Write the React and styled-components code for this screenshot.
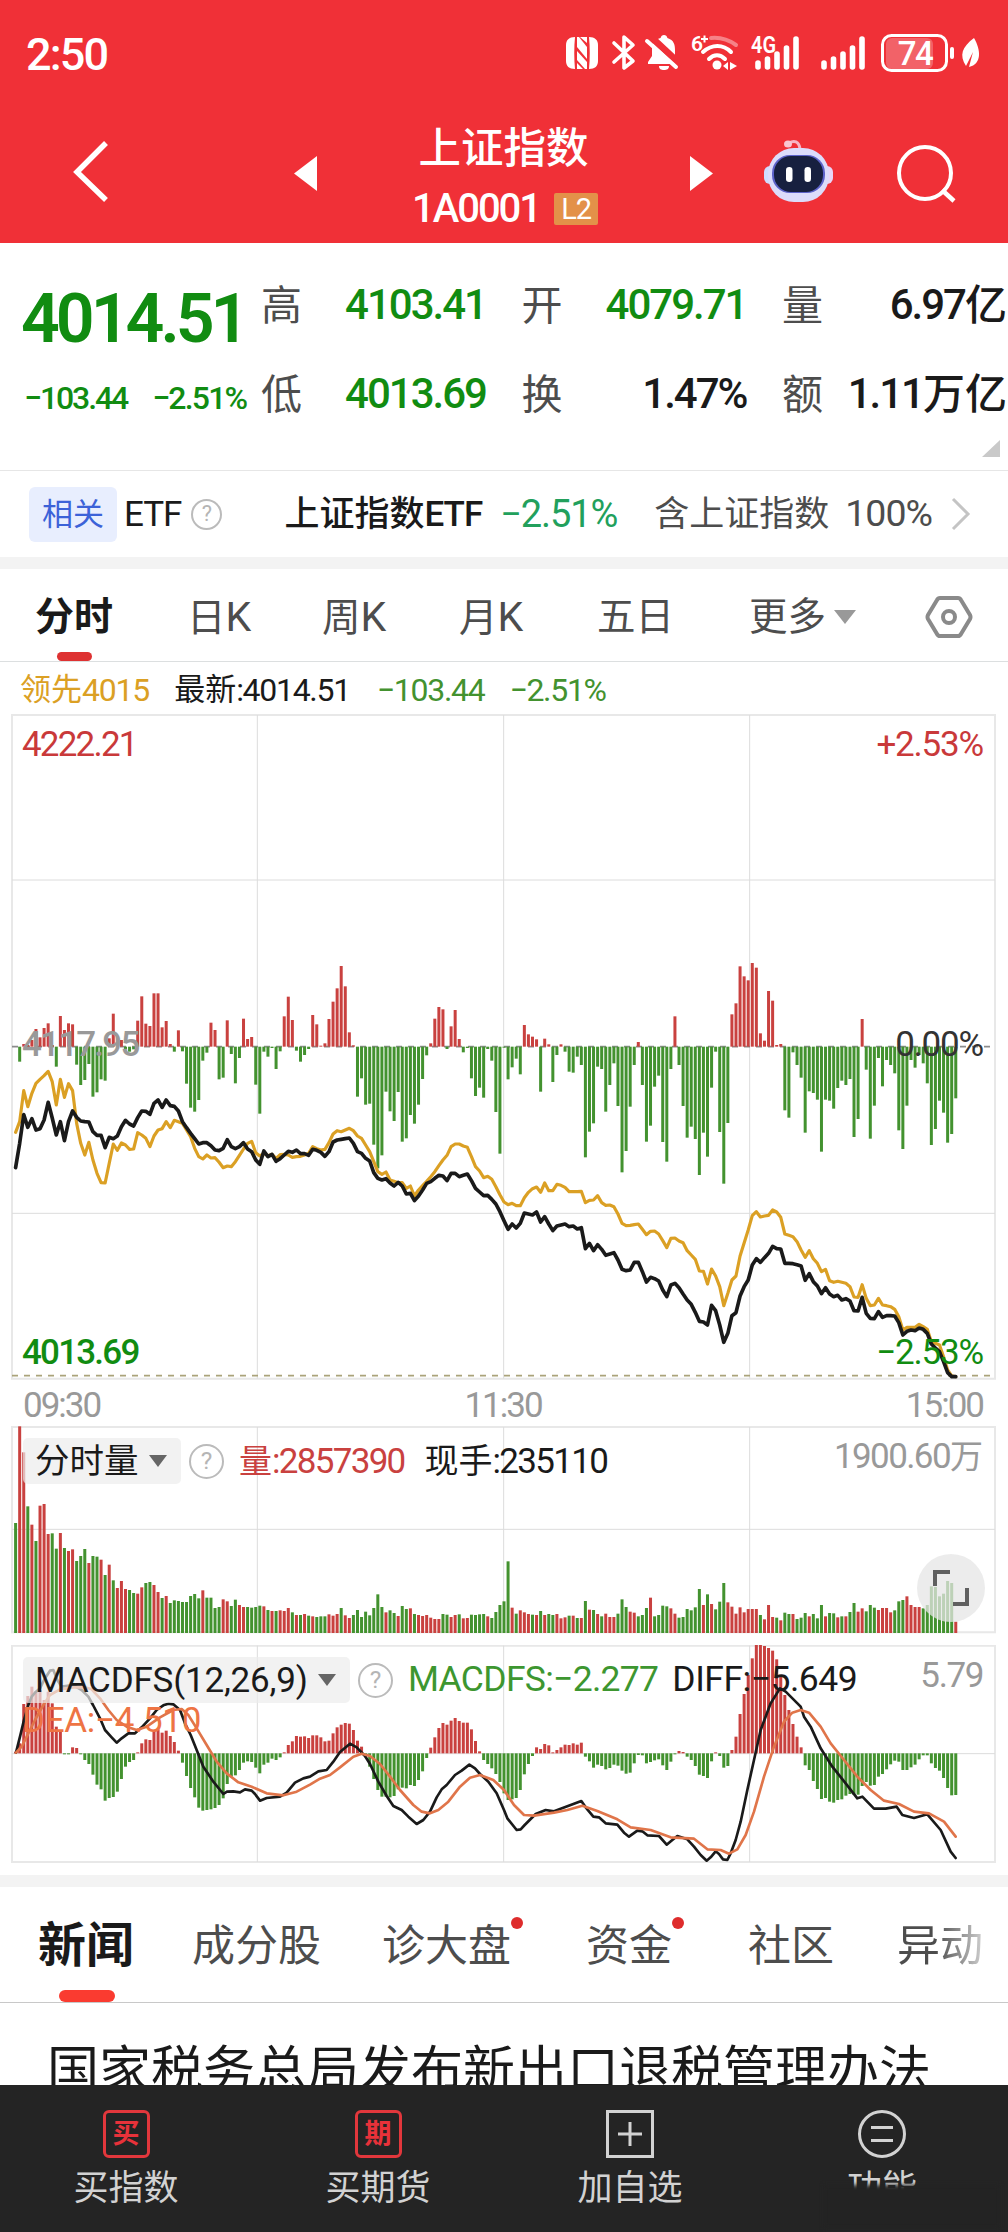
import React from "react"
import styled, { createGlobalStyle, css } from "styled-components"

const GlobalStyle = createGlobalStyle`
  * {
    box-sizing: border-box;
  }

  body {
    margin: 0;
    background: #fff;
    font-family: Roboto, "Noto Sans CJK SC", sans-serif;
    color: #1a1a1a;
  }
`

const RED = "#c9413f"
const GREEN = "#43922f"
const DOWN = "#118c11"
const GOLD = "#dba024"

/* one entry per trading minute, three units per pixel */
const advance = [
  0, -45, 8, 5, 20, 53, 28, 56, 70, 5, -60, 92, 50, 70, 67, -54, -115, -100, -52, -150,
  -137, -98, -102, 25, 99, 30, 20, -8, -15, -8, 78, 151, 69, 62, 160, 160, 58, 77, 8, -15,
  49, -14, -111, -183, -195, -160, -42, -18, 72, 50, -98, -93, 79, -22, -110, -34, 84, 23, 29, -114,
  -201, -15, -30, -4, -67, -14, 91, 150, 80, -12, -45, -25, -7, 95, 67, 3, 10, 83, 135, 175,
  242, 181, 43, 4, -150, -95, -174, -171, -294, -365, -326, -135, -194, -223, -136, -285, -275, -205, -231, -174,
  -97, -26, 10, 84, 119, 112, -7, 61, 110, 23, -17, -4, -95, -148, -123, -153, -7, -42, -196, -321,
  -3, -98, -62, -36, -83, 65, 37, 30, 22, -135, 24, 7, -106, -25, 7, -15, -75, -78, -30, -55,
  -332, -255, -230, -60, -67, -195, -115, -50, -178, -377, -313, -180, -55, 14, -115, -285, -237, -120, -87, -286,
  -345, -67, 91, -55, -178, -273, -240, -277, -385, -258, -330, -123, -15, -256, -411, -229, 97, 130, 241, 211,
  199, 251, 237, 40, 18, 167, 138, 5, 8, -191, -213, -17, -55, -93, -258, -134, -139, -159, -315, -159,
  -162, -186, -124, -102, -115, -97, -271, -217, 83, -69, -276, -177, -34, -119, -40, -55, -80, -251, -307, -177,
  -40, -63, -25, -50, -110, -295, -247, -162, -198, -288, -262, -155,
]

const price = [
  683, 610, 524, 562, 536, 570, 566, 540, 487, 534, 585, 545, 602, 545, 513, 532, 543, 545, 546, 575,
  586, 586, 623, 592, 596, 588, 560, 541, 552, 558, 533, 513, 514, 523, 490, 480, 502, 480, 497, 499,
  513, 545, 563, 580, 596, 612, 608, 608, 617, 630, 632, 625, 599, 620, 626, 620, 608, 627, 635, 660,
  673, 633, 650, 643, 664, 656, 645, 634, 637, 630, 641, 641, 646, 628, 631, 637, 649, 635, 606, 600,
  598, 596, 594, 610, 635, 640, 655, 663, 698, 715, 720, 716, 729, 738, 727, 738, 762, 760, 782, 768,
  750, 730, 725, 715, 706, 708, 722, 700, 700, 710, 706, 702, 722, 745, 756, 767, 766, 778, 792, 815,
  842, 868, 852, 864, 850, 819, 822, 825, 816, 846, 830, 852, 872, 858, 855, 852, 860, 858, 867, 863,
  926, 910, 932, 914, 928, 946, 942, 938, 960, 988, 992, 990, 967, 967, 995, 1026, 1012, 1016, 1023, 1050,
  1070, 1035, 1030, 1043, 1062, 1080, 1093, 1117, 1144, 1146, 1155, 1096, 1112, 1155, 1207, 1180, 1127, 1118, 1068, 1040,
  1020, 975, 956, 967, 953, 940, 919, 926, 927, 970, 970, 971, 974, 978, 1021, 1001, 1025, 1038, 1061, 1043,
  1062, 1070, 1066, 1080, 1076, 1083, 1112, 1113, 1072, 1120, 1135, 1136, 1115, 1132, 1127, 1127, 1128, 1148, 1185, 1174,
  1170, 1172, 1164, 1168, 1180, 1212, 1224, 1235, 1265, 1298, 1310, 1310,
]

const leading = [
  577, 545, 452, 500, 460, 430, 418, 407, 394, 425, 495, 418, 472, 431, 452, 550, 610, 645, 607, 660,
  700, 728, 729, 670, 612, 631, 609, 615, 628, 627, 578, 585, 595, 620, 588, 570, 566, 545, 563, 541,
  545, 550, 570, 590, 625, 650, 657, 645, 654, 653, 667, 683, 678, 680, 665, 646, 627, 610, 604, 638,
  648, 640, 647, 643, 655, 644, 643, 645, 652, 650, 649, 645, 640, 620, 626, 630, 628, 608, 582, 572,
  575, 570, 565, 572, 588, 595, 615, 635, 665, 695, 703, 696, 720, 724, 728, 728, 745, 738, 768, 750,
  737, 724, 710, 695, 677, 660, 646, 620, 612, 612, 618, 622, 650, 680, 693, 713, 709, 718, 740, 764,
  786, 794, 790, 797, 797, 773, 757, 746, 741, 757, 729, 752, 752, 733, 736, 742, 755, 755, 755, 754,
  788, 781, 780, 767, 788, 796, 795, 800, 822, 850, 857, 856, 854, 852, 868, 884, 874, 873, 882, 902,
  923, 895, 894, 903, 908, 932, 945, 958, 993, 994, 1032, 987, 1008, 1040, 1097, 1060, 1020, 1008, 948, 909,
  870, 827, 815, 831, 828, 826, 810, 816, 832, 882, 886, 890, 905, 930, 952, 932, 956, 970, 995, 988,
  1022, 1027, 1024, 1027, 1030, 1040, 1071, 1072, 1034, 1075, 1097, 1095, 1075, 1095, 1097, 1100, 1108, 1130, 1170, 1162,
  1162, 1162, 1153, 1160, 1168, 1205, 1210, 1215, 1250, 1290, 1308, 1310,
]

/* negative = falling minute, drawn green */
const volume = [
  -330, 620, 542, -380, 325, -276, 382, 387, 297, -299, -253, 300, -255, 246, 251, -216, -231, -252, 210, -231,
  -229, 220, -174, 205, -158, 135, 156, 132, -129, -120, 118, 137, -150, -153, 144, 123, -105, 111, -90, -98,
  -96, -93, -93, -111, -117, -104, 128, -106, -106, -75, -78, 101, 95, -81, -100, 84, 78, -78, -76, -78,
  -82, 80, -69, 66, -66, 68, 66, 75, -62, 54, -54, 57, -52, 50, -48, -50, -50, 56, 52, 57,
  -75, 53, 45, -54, -69, -48, -64, -53, -75, -116, -78, 62, -68, -60, 51, -81, -72, 74, -57, 54,
  51, 54, 46, 42, 42, -57, -55, 48, 54, -56, 44, 45, -55, -54, -56, -57, 50, -45, -63, -84,
  -95, -215, 76, -58, 68, 62, 57, -55, 54, -66, 54, -57, -54, 57, 44, 47, -52, 52, -45, 45,
  -96, 70, -69, 57, -50, 58, 48, 48, -58, -101, -78, 64, 61, -50, -54, -75, 106, -50, -54, -82,
  -80, 74, 58, -46, -48, -72, -68, -77, -132, 84, -116, 87, -71, -94, -150, 92, 79, 58, 77, 62,
  72, 72, 72, -54, 41, 84, 48, -46, 38, -61, -57, 57, -42, -46, -60, 50, -57, -44, -84, 50,
  -60, -59, 47, -50, 50, -63, -90, 64, 74, -65, -84, -76, 69, 75, 75, 62, -68, -95, -99, 110,
  84, 78, 78, -74, -84, -140, -138, -110, -118, -156, -150, 34,
]

const macd = [
  5, 30, 148, 172, 200, 185, 190, 160, 185, 150, 80, 65, -3, -3, 18, 16, -3, -20, -32, -64,
  -94, -108, -142, -134, -131, -115, -77, -40, -26, -20, 3, 30, 42, 40, 65, 72, 62, 68, 52, 34,
  8, -28, -68, -104, -132, -163, -172, -170, -168, -164, -155, -135, -92, -70, -66, -50, -28, -24, -26, -43,
  -60, -34, -28, -16, -20, -12, 3, 25, 36, 52, 50, 51, 46, 54, 54, 48, 36, 38, 60, 78,
  86, 91, 89, 70, 38, 20, -12, -40, -77, -110, -130, -130, -132, -128, -108, -103, -105, -95, -98, -80,
  -54, -14, 17, 48, 76, 91, 86, 98, 106, 97, 92, 92, 72, 37, 6, -20, -32, -45, -62, -86,
  -120, -140, -138, -134, -110, -63, -32, -8, 18, 13, 28, 24, 3, 10, 18, 26, 25, 30, 26, 32,
  -10, -24, -43, -34, -38, -48, -44, -34, -37, -52, -61, -58, -30, -5, -6, -30, -26, -21, -18, -36,
  -50, -25, -3, 7, 4, -10, -20, -38, -64, -68, -74, -24, 3, -8, -43, -38, 10, 50, 118, 178,
  235, 285, 325, 325, 322, 316, 308, 282, 230, 175, 130, 88, 50, 18, -36, -50, -83, -107, -137, -134,
  -145, -148, -140, -138, -127, -122, -125, -124, -98, -86, -97, -95, -70, -62, -48, -33, -22, -25, -50, -50,
  -42, -34, -18, -6, -6, -30, -44, -52, -74, -104, -126, -125,
]

const diffLine =
  "48,368 60,320 72,270 85,225 95,200 108,185 120,175 132,150 150,122 160,120 172,150 185,170 220,165 245,180 265,200 279,225 300,265 315,300 335,322 350,338 365,325 385,310 405,310 425,292 450,265 470,240 490,226 505,221 520,223 540,240 555,280 572,315 590,360 610,410 640,455 670,492 681,485 700,484 720,487 735,478 755,482 765,492 780,512 800,504 840,500 860,488 885,458 910,445 930,440 955,424 980,420 1000,395 1020,366 1050,341 1070,352 1095,378 1110,402 1135,455 1160,498 1180,528 1205,540 1225,560 1250,582 1270,570 1290,545 1310,502 1325,478 1340,465 1365,435 1385,422 1408,404 1425,415 1440,432 1465,455 1490,490 1512,540 1522,565 1550,600 1562,598 1574,585 1607,552 1637,540 1662,544 1744,513 1757,532 1780,560 1797,562 1817,580 1852,584 1872,608 1887,620 1912,602 1927,604 1942,616 1977,618 2000,644 2017,630 2032,618 2062,628 2082,650 2102,675 2120,692 2132,682 2147,664 2157,672 2169,688 2182,690 2192,670 2207,630 2222,575 2242,480 2262,390 2282,300 2312,220 2340,175 2357,185 2402,230 2412,260 2432,290 2462,355 2497,410 2537,460 2572,505 2587,500 2622,536 2657,536 2690,530 2707,555 2742,564 2782,553 2822,600 2852,665 2867,684"

const deaLine =
  "48,368 65,350 85,310 105,270 130,225 150,195 180,178 220,172 255,172 275,178 300,205 325,240 350,270 380,290 410,300 440,290 480,262 520,240 545,237 565,255 590,295 620,345 650,395 680,430 715,457 755,470 800,490 850,496 890,485 930,464 960,446 990,435 1020,412 1060,380 1085,371 1110,378 1140,402 1170,440 1200,480 1240,525 1265,545 1290,550 1315,540 1345,515 1380,470 1410,443 1440,435 1480,450 1512,480 1542,525 1572,555 1602,557 1662,548 1702,540 1747,527 1792,543 1852,568 1892,592 1952,600 2012,622 2082,626 2122,658 2162,660 2187,671 2212,658 2237,615 2262,545 2292,440 2322,350 2352,275 2377,248 2402,240 2427,248 2462,290 2492,340 2532,390 2572,440 2612,480 2652,512 2697,522 2742,545 2787,550 2832,575 2867,620"

const minuteX = i => 46.8 + i * 12.21
const toPoints = series => series.map((y, i) => `${minuteX(i)},${y}`).join(" ")

const Screen = styled.main`
  width: 1008px;
  height: 2232px;
  display: flex;
  flex-direction: column;
  overflow: hidden;
  background: #fff;
`

const Txt = styled.span`
  font-size: ${props => props.$s || 35}px;
  font-weight: ${props => props.$w || 400};
  letter-spacing: ${props => props.$ls || 0}px;
  color: ${props => props.$c || "inherit"};
  line-height: 1;
  white-space: nowrap;
`

const StatusBar = styled.div`
  height: 108px;
  flex-shrink: 0;
  display: flex;
  justify-content: space-between;
  align-items: flex-start;
  padding: 34px 28px 0 26px;
  background: #f03037;
  color: #fff;
`

const Clock = styled(Txt)`
  line-height: 42px;
`

const StatusIcons = styled.div`
  display: flex;

  svg {
    display: block;
    overflow: visible;
  }
`

const Header = styled.header`
  height: 135px;
  flex-shrink: 0;
  display: flex;
  align-items: flex-start;
  padding-left: 73px;
  background: #f03037;
  color: #fff;
`

const HeaderIcon = styled.svg`
  flex-shrink: 0;
  margin-left: ${props => props.$left || 0}px;
  margin-top: ${props => props.$top}px;
`

const Title = styled.div`
  width: 373px;
  display: flex;
  flex-direction: column;
  align-items: center;
  padding-top: 20px;
`

const TitleCode = styled.div`
  display: flex;
  align-items: center;
  gap: 14px;
  margin-top: 18px;
  padding-left: 3px;
`

const Level = styled.span`
  width: 44px;
  height: 32px;
  border-radius: 2px;
  background: #e39149;
  font-size: 29px;
  line-height: 32px;
  text-align: center;
  letter-spacing: -1px;
`

const Quote = styled.section`
  height: 228px;
  flex-shrink: 0;
  display: flex;
  position: relative;
  border-bottom: 1px solid #e6e6e6;
`

const Last = styled.div`
  width: 261px;
  flex-shrink: 0;
  padding: 42px 0 0 21px;
  color: ${DOWN};
`

const Change = styled.div`
  display: flex;
  gap: 25px;
  margin-top: 29px;
  padding-left: 3px;
`

const Stats = styled.div`
  display: grid;
  grid-template-columns: repeat(3, 225px);
  grid-auto-rows: 89px;
  column-gap: 35.5px;
  padding-top: 17px;
`

const Stat = styled.div`
  display: flex;
  align-items: center;
  justify-content: space-between;
`

const StatLabel = styled(Txt)`
  padding-top: 3px;
`

const Value = styled.span`
  display: flex;
  align-items: center;
`

const Corner = styled.i`
  position: absolute;
  right: 8px;
  bottom: 13px;
  border-left: 18px solid transparent;
  border-bottom: 17px solid #c9c9c9;
`

const EtfRow = styled.section`
  height: 86px;
  flex-shrink: 0;
  display: flex;
  align-items: center;
  padding-left: 29px;
`

const Tag = styled.span`
  width: 88px;
  height: 55px;
  border-radius: 6px;
  background: #e8eefe;
  color: #3c62d8;
  font-size: 31px;
  line-height: 55px;
  text-align: center;
  margin-right: 7px;
`

const Push = styled.span`
  margin-left: ${props => props.$left}px;
  display: flex;
  align-items: center;
`

const Band = styled.div`
  height: 12px;
  flex-shrink: 0;
  background: #f3f3f3;
`

const tabBar = css`
  flex-shrink: 0;
  display: flex;
  align-items: center;
  position: relative;
  white-space: nowrap;
`

const ChartTabs = styled.nav`
  ${tabBar}
  height: 93px;
  padding-top: 4px;
  border-bottom: 1px solid #dcdfe0;
  color: #4d4d4d;
`

const Tab = styled.span`
  margin-left: ${props => props.$left}px;
  width: ${props => props.$width}px;
  font-size: ${props => props.$s || 38.5}px;
  font-weight: ${props => (props.$active ? 700 : 400)};
  color: ${props => (props.$active ? "#1a1a1a" : "inherit")};
  line-height: 1;
  position: relative;
`

const Period = styled.span`
  font-size: 41px;
`

const Indicator = styled.i`
  position: absolute;
  bottom: 0;
  left: ${props => props.$left}px;
  width: ${props => props.$width}px;
  height: ${props => props.$height}px;
  border-radius: 6px;
  background: ${props => props.$c};
`

const Legend = styled.div`
  height: 52px;
  flex-shrink: 0;
  display: flex;
  align-items: center;
  padding: 3px 0 0 20px;
`

const ChartBox = styled.section`
  position: relative;
  flex-shrink: 0;
  height: ${props => props.$height}px;
  margin-bottom: ${props => props.$gap || 0}px;

  > svg {
    display: block;
    width: 100%;
    height: 100%;
  }
`

const OverRow = styled.div`
  position: absolute;
  left: ${props => props.$left || 22}px;
  right: 25px;
  top: ${props => props.$top}px;
  display: flex;
  align-items: center;
  justify-content: ${props => (props.$start ? "flex-start" : "space-between")};
`

const TopRight = styled.div`
  position: absolute;
  right: 25px;
  top: ${props => props.$top}px;
  display: flex;
  align-items: center;
`

const TimeAxis = styled.div`
  height: 46px;
  flex-shrink: 0;
  display: flex;
  justify-content: space-between;
  align-items: center;
  padding: 4px 25px 0 23px;
  color: #999;
`

const Picker = styled.span`
  width: ${props => props.$width}px;
  height: 46px;
  border-radius: 5px;
  display: flex;
  align-items: center;
  justify-content: space-between;
  padding: 0 14px 0 12px;
  background: rgba(236, 236, 236, 0.7);
`

const Help = styled.i`
  width: ${props => props.$size}px;
  height: ${props => props.$size}px;
  margin-left: ${props => props.$left}px;
  border: 2px solid #bbb;
  border-radius: 50%;
  display: flex;
  align-items: center;
  justify-content: center;
  flex-shrink: 0;
  font-style: normal;
  font-size: ${props => props.$size * 0.7}px;
  line-height: 1;
  color: #b5b5b5;
`

const Caret = styled.i`
  border: ${props => props.$size || 9}px solid transparent;
  border-top: ${props => (props.$size || 9) * 1.35}px solid ${props => props.$c || "#666"};
  border-bottom: 0;
`

const Expand = styled.div`
  position: absolute;
  right: 23px;
  bottom: 12px;
  width: 68px;
  height: 68px;
  border-radius: 50%;
  background: rgba(230, 230, 230, 0.75);
  display: flex;
  align-items: center;
  justify-content: center;
`

const NewsTabs = styled.nav`
  ${tabBar}
  height: 116px;
  padding-top: 3px;
  border-bottom: 1px solid #c8c8c8;
  color: #4d4d4d;
`

const Dot = styled.i`
  position: absolute;
  right: -12px;
  top: -8px;
  width: 12px;
  height: 12px;
  border-radius: 50%;
  background: #de2c2c;
`

const Fade = styled.span`
  background: linear-gradient(90deg, #4d4d4d 45%, #cfcfcf 100%);
  background-clip: text;
  -webkit-background-clip: text;
  color: transparent;
`

const Headline = styled.div`
  height: 82px;
  flex-shrink: 0;
  padding: 36px 0 0 47px;
  font-size: 52px;
  line-height: 66px;
  white-space: nowrap;
`

const BottomBar = styled.footer`
  height: 147px;
  flex-shrink: 0;
  display: grid;
  grid-template-columns: repeat(4, 1fr);
  position: relative;
  background: #242424;
  color: #d2d2d2;
`

const Action = styled.div`
  display: flex;
  flex-direction: column;
  align-items: center;
  padding-top: 25px;
  gap: 13px;
`

const Stamp = styled.span`
  width: 47px;
  height: 48px;
  border: 3px solid #e2373c;
  border-radius: 6px;
  color: #e8323a;
  font-size: 27px;
  font-weight: 700;
  line-height: 42px;
  text-align: center;
`

const Smudge = styled.i`
  position: absolute;
  right: 8px;
  bottom: 4px;
  width: 176px;
  height: 43px;
  background: #232323;
  filter: blur(2px);
`

const Bars = ({ data, zero, mirror }) =>
  data.map((v, i) => {
    const h = Math.abs(v)
    return (
      <rect
        key={i}
        x={minuteX(i) - 4.5}
        y={mirror || v > 0 ? zero - h : zero}
        width="9"
        height={h}
        fill={v > 0 ? RED : GREEN}
      />
    )
  })

const Grid = ({ top, rows, bottom }) => (
  <g fill="none">
    <path
      d={`M36 ${top}H2985V${bottom}H36Z`}
      stroke="#e8e8e8"
      strokeWidth="6"
    />
    <path
      d={
        [772, 1511, 2249].map(x => `M${x} ${top}V${bottom}`).join("") +
        rows.map(y => `M36 ${y}H2985`).join("")
      }
      stroke="#dcdcdc"
      strokeWidth="3"
    />
  </g>
)

const SignalBars = ({ x }) => (
  <path
    d={`M${x + 3} 29v4M${x + 12.5} 25v8M${x + 22} 20v13M${x + 31.5} 14v19M${x + 41} 5v28`}
    stroke="#fff"
    strokeWidth="5.6"
    strokeLinecap="round"
  />
)

function Status() {
  return (
    <StatusBar>
      <Clock $s={45} $w={500} $ls={-1.8}>
        2:50
      </Clock>
      <StatusIcons>
        <svg width="46" height="38">
          <path
            d="M9 3C3 3 0 6 0 11V27C0 32 3 35 9 35C8 25 8 13 9 3Z"
            fill="#fff"
          />
          <path
            d="M23 3C29 3 32 6 32 11V27C32 32 29 35 23 35C24 25 24 13 23 3Z"
            fill="#fff"
          />
          <path d="M11 3H13L21 13V25L11 13Z" fill="#fff" />
          <path d="M11 17L21 28V35H19L11 26Z" fill="#fff" />
          <path d="M14 3H21V9ZM11 29V35H17Z" fill="#fff" />
        </svg>
        <svg width="36" height="38">
          <path
            d="M2 9l19 18-9 7V3l9 8L2 28"
            fill="none"
            stroke="#fff"
            strokeWidth="3.6"
            strokeLinejoin="round"
            strokeLinecap="round"
          />
        </svg>
        <svg width="43" height="38">
          <path
            d="M16 1c1.700 0 3 1 3.400 3C26 6 27 11 27 16v6l4 6v2H0v-2l4-6v-6C4 10 6 6 12.600 4 13 2 14.300 1 16 1ZM11 32h10c0 3-2 4-5 4s-5-1-5-4Z"
            fill="#fff"
          />
          <path d="M3 3l30 28" stroke="#f03037" strokeWidth="7" />
          <path
            d="M-1 7l29 26"
            stroke="#fff"
            strokeWidth="4"
            strokeLinecap="round"
          />
        </svg>
        <svg width="60" height="38">
          <text x="0" y="17" fill="#fff" fontSize="21" fontWeight="600">
            6
          </text>
          <path d="M10 5h7M13.500 1.500v7" stroke="#fff" strokeWidth="2" />
          <g fill="none" stroke="#fff" strokeWidth="4" strokeLinecap="round">
            <path d="M12 18c9-8 20-8 28 0M18 25c5-5 11-5 16 0" />
            <path d="M20 4c10-1 18 2 25 7" opacity=".4" />
          </g>
          <circle cx="26" cy="31" r="4.500" fill="#fff" />
          <path d="M32 32l5-4v8ZM39 28l7 4-7 4Z" fill="#fff" />
        </svg>
        <svg width="72" height="38">
          <text
            x="0"
            y="19"
            fill="#fff"
            fontSize="23"
            fontWeight="600"
            textLength="25"
            lengthAdjust="spacingAndGlyphs"
          >
            4G
          </text>
          <SignalBars x={4} />
        </svg>
        <svg width="58" height="38">
          <SignalBars x={-2} />
        </svg>
        <svg width="81" height="38">
          <rect x="5" y="4" width="47" height="31" rx="6" fill="#f26268" />
          <rect
            x="1.500"
            y="1.500"
            width="64"
            height="35"
            rx="9"
            fill="none"
            stroke="#fff"
            strokeWidth="3"
          />
          <path
            d="M71 15v8"
            stroke="#fff"
            strokeWidth="4"
            strokeLinecap="round"
          />
          <text
            x="34"
            y="31"
            fill="#fff"
            fontSize="33"
            fontWeight="500"
            textAnchor="middle"
            letterSpacing="-1.500"
          >
            74
          </text>
        </svg>
        <svg width="18" height="38">
          <path d="M12 4c7 12 8 26-5 29l4-15-7 14C-3 21 0 13 12 4Z" fill="#fff" />
        </svg>
      </StatusIcons>
    </StatusBar>
  )
}

function Robot() {
  return (
    <HeaderIcon $left={50} $top={30} width="69" height="66" viewBox="0 0 69 66">
      <path
        d="M25 5c5-3 10-2 11 6"
        fill="none"
        stroke="#f7b4c4"
        strokeWidth="3"
      />
      <ellipse cx="24" cy="6" rx="4" ry="3.500" fill="#f9c6d2" />
      <rect x="0" y="28" width="12" height="18" rx="6" fill="#cfdcff" />
      <rect x="57" y="28" width="12" height="18" rx="6" fill="#e8d6f7" />
      <rect x="4" y="10" width="61" height="54" rx="26" fill="#dcdcfb" />
      <rect x="8" y="17" width="53" height="38" rx="18" fill="#5c62c9" />
      <rect x="10" y="18" width="49" height="36" rx="17" fill="#17203f" />
      <rect x="22" y="29" width="6.500" height="15" rx="3.200" fill="#fff" />
      <rect x="40.500" y="29" width="6.500" height="15" rx="3.200" fill="#fff" />
    </HeaderIcon>
  )
}

const stats = [
  { label: "高", value: "4103.41", color: DOWN },
  { label: "开", value: "4079.71", color: DOWN },
  { label: "量", value: "6.97", unit: "亿" },
  { label: "低", value: "4013.69", color: DOWN },
  { label: "换", value: "1.47%" },
  { label: "额", value: "1.11", unit: "万亿" },
]

export default function App() {
  return (
    <Screen>
      <GlobalStyle />
      <Status />
      <Header>
        <HeaderIcon $top={33} width="36" height="62">
          <path
            d="M33 2L4 31L33 59"
            fill="none"
            stroke="#fff"
            strokeWidth="5.500"
          />
        </HeaderIcon>
        <HeaderIcon $left={185} $top={48} width="23" height="35">
          <path d="M0 17.500L23 0V35Z" fill="#fff" />
        </HeaderIcon>
        <Title>
          <Txt $s={42.5} $w={500}>
            上证指数
          </Txt>
          <TitleCode>
            <Txt $s={40} $w={500} $ls={-2}>
              1A0001
            </Txt>
            <Level>L2</Level>
          </TitleCode>
        </Title>
        <HeaderIcon $top={48} width="24" height="35">
          <path d="M23 17.500L0 0V35Z" fill="#fff" />
        </HeaderIcon>
        <Robot />
        <HeaderIcon $left={64} $top={36} width="60" height="60">
          <circle
            cx="28"
            cy="29"
            r="26"
            fill="none"
            stroke="#fff"
            strokeWidth="4"
          />
          <path d="M45 46l12 11" stroke="#fff" strokeWidth="4.500" />
        </HeaderIcon>
      </Header>

      <Quote>
        <Last>
          <Txt $s={68} $w={600} $ls={-4}>
            4014.51
          </Txt>
          <Change>
            <Txt $s={32} $w={500} $ls={-2.1}>
              −103.44
            </Txt>
            <Txt $s={32} $w={500} $ls={-1.8}>
              −2.51%
            </Txt>
          </Change>
        </Last>
        <Stats>
          {stats.map(item => (
            <Stat key={item.label}>
              <StatLabel $s={41} $c="#4d4d4d">
                {item.label}
              </StatLabel>
              <Value>
                <Txt $s={42} $w={500} $ls={-2} $c={item.color}>
                  {item.value}
                </Txt>
                {item.unit && (
                  <StatLabel $s={42} $w={500}>
                    {item.unit}
                  </StatLabel>
                )}
              </Value>
            </Stat>
          ))}
        </Stats>
        <Corner />
      </Quote>

      <EtfRow>
        <Tag>相关</Tag>
        <Txt $s={35} $ls={-1}>
          ETF
        </Txt>
        <Help $size={31} $left={10}>
          ?
        </Help>
        <Push $left={62}>
          <Txt $s={35} $w={500}>
            上证指数
          </Txt>
          <Txt $s={35} $w={500} $ls={-1}>
            ETF
          </Txt>
        </Push>
        <Push $left={18}>
          <Txt $s={38} $ls={-1.1} $c="#22a05c">
            −2.51%
          </Txt>
        </Push>
        <Push $left={37}>
          <Txt $s={35} $c="#4d4d4d">
            含上证指数
          </Txt>
        </Push>
        <Push $left={16}>
          <Txt $s={37.5} $ls={-1} $c="#4d4d4d">
            100%
          </Txt>
        </Push>
        <HeaderIcon $left={19} $top={0} width="20" height="34">
          <path
            d="M2 2L17 17L2 32"
            fill="none"
            stroke="#c4c4c4"
            strokeWidth="3"
          />
        </HeaderIcon>
      </EtfRow>
      <Band />

      <ChartTabs>
        <Tab $left={35} $width={78} $s={39} $active>
          分时
        </Tab>
        <Tab $left={74} $width={66}>
          日<Period>K</Period>
        </Tab>
        <Tab $left={69} $width={68}>
          周<Period>K</Period>
        </Tab>
        <Tab $left={69} $width={68}>
          月<Period>K</Period>
        </Tab>
        <Tab $left={70} $width={77}>
          五日
        </Tab>
        <Tab $left={75} $width={78}>
          更多
        </Tab>
        <Push $left={7}>
          <Caret $size={11} $c="#999" />
        </Push>
        <HeaderIcon $left={69} $top={0} width="48" height="44">
          <path
            d="M15 3H33Q35 3 36 5L45 20Q46 22 45 24L36 39Q35 41 33 41H15Q13 41 12 39L3 24Q2 22 3 20L12 5Q13 3 15 3Z"
            fill="none"
            stroke="#8a8a8a"
            strokeWidth="4"
          />
          <circle
            cx="24"
            cy="22"
            r="6"
            fill="none"
            stroke="#8a8a8a"
            strokeWidth="4"
          />
        </HeaderIcon>
        <Indicator $left={57} $width={35} $height={9} $c="#de3232" />
      </ChartTabs>

      <Legend>
        <Txt $s={31} $c={GOLD}>
          领先
        </Txt>
        <Txt $s={32} $ls={-1.2} $c={GOLD}>
          4015
        </Txt>
        <Push $left={25}>
          <Txt $s={31}>最新</Txt>
          <Txt $s={32} $ls={-1.3}>
            :4014.51
          </Txt>
        </Push>
        <Push $left={27}>
          <Txt $s={32} $ls={-1.3} $c={GREEN}>
            −103.44
          </Txt>
        </Push>
        <Push $left={25}>
          <Txt $s={32} $ls={-1.3} $c={GREEN}>
            −2.51%
          </Txt>
        </Push>
      </Legend>

      <ChartBox $height={666}>
        <svg viewBox="0 -678 3024 1998">
          <Grid top={-675} rows={[-180, 820]} bottom={1316} />
          <path
            d="M36 320H2985"
            stroke="#8c8c8c"
            strokeWidth="5"
            strokeDasharray="18 18"
          />
          <path
            d="M36 1307H2985"
            stroke="#aaa37a"
            strokeWidth="5"
            strokeDasharray="18 18"
          />
          <Bars data={advance} zero={320} />
          <g fill="none" strokeLinejoin="round" strokeLinecap="round">
            <polyline
              points={toPoints(leading)}
              stroke={GOLD}
              strokeWidth="9.5"
            />
            <polyline
              points={toPoints(price)}
              stroke="#1a1a1a"
              strokeWidth="11"
            />
          </g>
        </svg>
        <OverRow $top={13}>
          <Txt $ls={-1.8} $c="#c9393a">
            4222.21
          </Txt>
          <Txt $ls={-1.2} $c="#c9393a">
            +2.53%
          </Txt>
        </OverRow>
        <OverRow $top={313}>
          <Txt $ls={-1.8} $w={500} $c="#999">
            4117.95
          </Txt>
          <Txt $ls={-1.2} $c="#333">
            0.00%
          </Txt>
        </OverRow>
        <OverRow $top={621}>
          <Txt $ls={-1.8} $w={500} $c={DOWN}>
            4013.69
          </Txt>
          <Txt $ls={-1.2} $c={DOWN}>
            −2.53%
          </Txt>
        </OverRow>
      </ChartBox>

      <TimeAxis>
        <Txt $ls={-2}>09:30</Txt>
        <Txt $ls={-2}>11:30</Txt>
        <Txt $ls={-2}>15:00</Txt>
      </TimeAxis>

      <ChartBox $height={208} $gap={11}>
        <svg viewBox="0 678 3024 624">
          <Grid top={681} rows={[988]} bottom={1297} />
          <Bars data={volume} zero={1299} mirror />
        </svg>
        <OverRow $top={12} $left={23} $start>
          <Picker $width={158}>
            <Txt $s={34.5}>分时量</Txt>
            <Caret />
          </Picker>
          <Help $size={35} $left={8}>
            ?
          </Help>
          <Push $left={15}>
            <Txt $s={33} $c={RED}>
              量
            </Txt>
            <Txt $ls={-1.7} $c={RED}>
              :2857390
            </Txt>
          </Push>
          <Push $left={20}>
            <Txt $s={34}>现手</Txt>
            <Txt $ls={-1.7}>:235110</Txt>
          </Push>
        </OverRow>
        <TopRight $top={13}>
          <Txt $ls={-1.6} $c="#999">
            1900.60
          </Txt>
          <Txt $s={33} $c="#999">
            万
          </Txt>
        </TopRight>
        <Expand>
          <svg width="36" height="36" fill="none" stroke="#606060" strokeWidth="4">
            <path d="M2 16V2H17M20 34H34V18" />
          </svg>
        </Expand>
      </ChartBox>

      <ChartBox $height={218} $gap={12}>
        <svg viewBox="0 45 3024 654">
          <Grid top={47} rows={[371]} bottom={696} />
          <Bars data={macd} zero={370} />
          <g fill="none" strokeLinejoin="round" strokeLinecap="round">
            <polyline points={diffLine} stroke="#1a1a1a" strokeWidth="8" />
            <polyline points={deaLine} stroke="#e0754a" strokeWidth="8" />
          </g>
        </svg>
        <OverRow $top={12} $left={23} $start>
          <Picker $width={327}>
            <Txt $ls={-0.2}>MACDFS(12,26,9)</Txt>
            <Caret />
          </Picker>
          <Help $size={35} $left={8}>
            ?
          </Help>
          <Push $left={15}>
            <Txt $s={35.5} $ls={-0.7} $c="#3d9630">
              MACDFS:−2.277
            </Txt>
          </Push>
          <Push $left={14}>
            <Txt $s={35.5} $ls={-0.5}>
              DIFF:−5.649
            </Txt>
          </Push>
        </OverRow>
        <OverRow $top={58} $start>
          <Txt $c="#ee7444" $ls={-0.3}>
            DEA:−4.510
          </Txt>
        </OverRow>
        <TopRight $top={13}>
          <Txt $ls={-1.4} $c="#999">
            5.79
          </Txt>
        </TopRight>
      </ChartBox>
      <Band />

      <NewsTabs>
        <Tab $left={38} $width={96} $s={48} $active>
          新闻
        </Tab>
        <Tab $left={58} $width={129} $s={43}>
          成分股
        </Tab>
        <Tab $left={61} $width={129} $s={43}>
          诊大盘
          <Dot />
        </Tab>
        <Tab $left={75} $width={86} $s={43}>
          资金
          <Dot />
        </Tab>
        <Tab $left={76} $width={86} $s={43}>
          社区
        </Tab>
        <Tab $left={63} $width={86} $s={43}>
          <Fade>异动</Fade>
        </Tab>
        <Indicator $left={59} $width={56} $height={12} $c="#fa3b30" />
      </NewsTabs>
      <Headline>国家税务总局发布新出口退税管理办法</Headline>

      <BottomBar>
        <Action>
          <Stamp>买</Stamp>
          <Txt>买指数</Txt>
        </Action>
        <Action>
          <Stamp>期</Stamp>
          <Txt>买期货</Txt>
        </Action>
        <Action>
          <svg width="48" height="48" fill="none" stroke="#d2d2d2" strokeWidth="3">
            <path d="M1.500 1.500H46.500V46.500H1.500ZM24 12V36M12 24H36" />
          </svg>
          <Txt>加自选</Txt>
        </Action>
        <Action>
          <svg width="50" height="48" fill="none" stroke="#d2d2d2" strokeWidth="3">
            <circle cx="25" cy="24" r="22.500" />
            <path d="M14 17.500H36M14 30.500H36" />
          </svg>
          <Txt>功能</Txt>
        </Action>
        <Smudge />
      </BottomBar>
    </Screen>
  )
}
